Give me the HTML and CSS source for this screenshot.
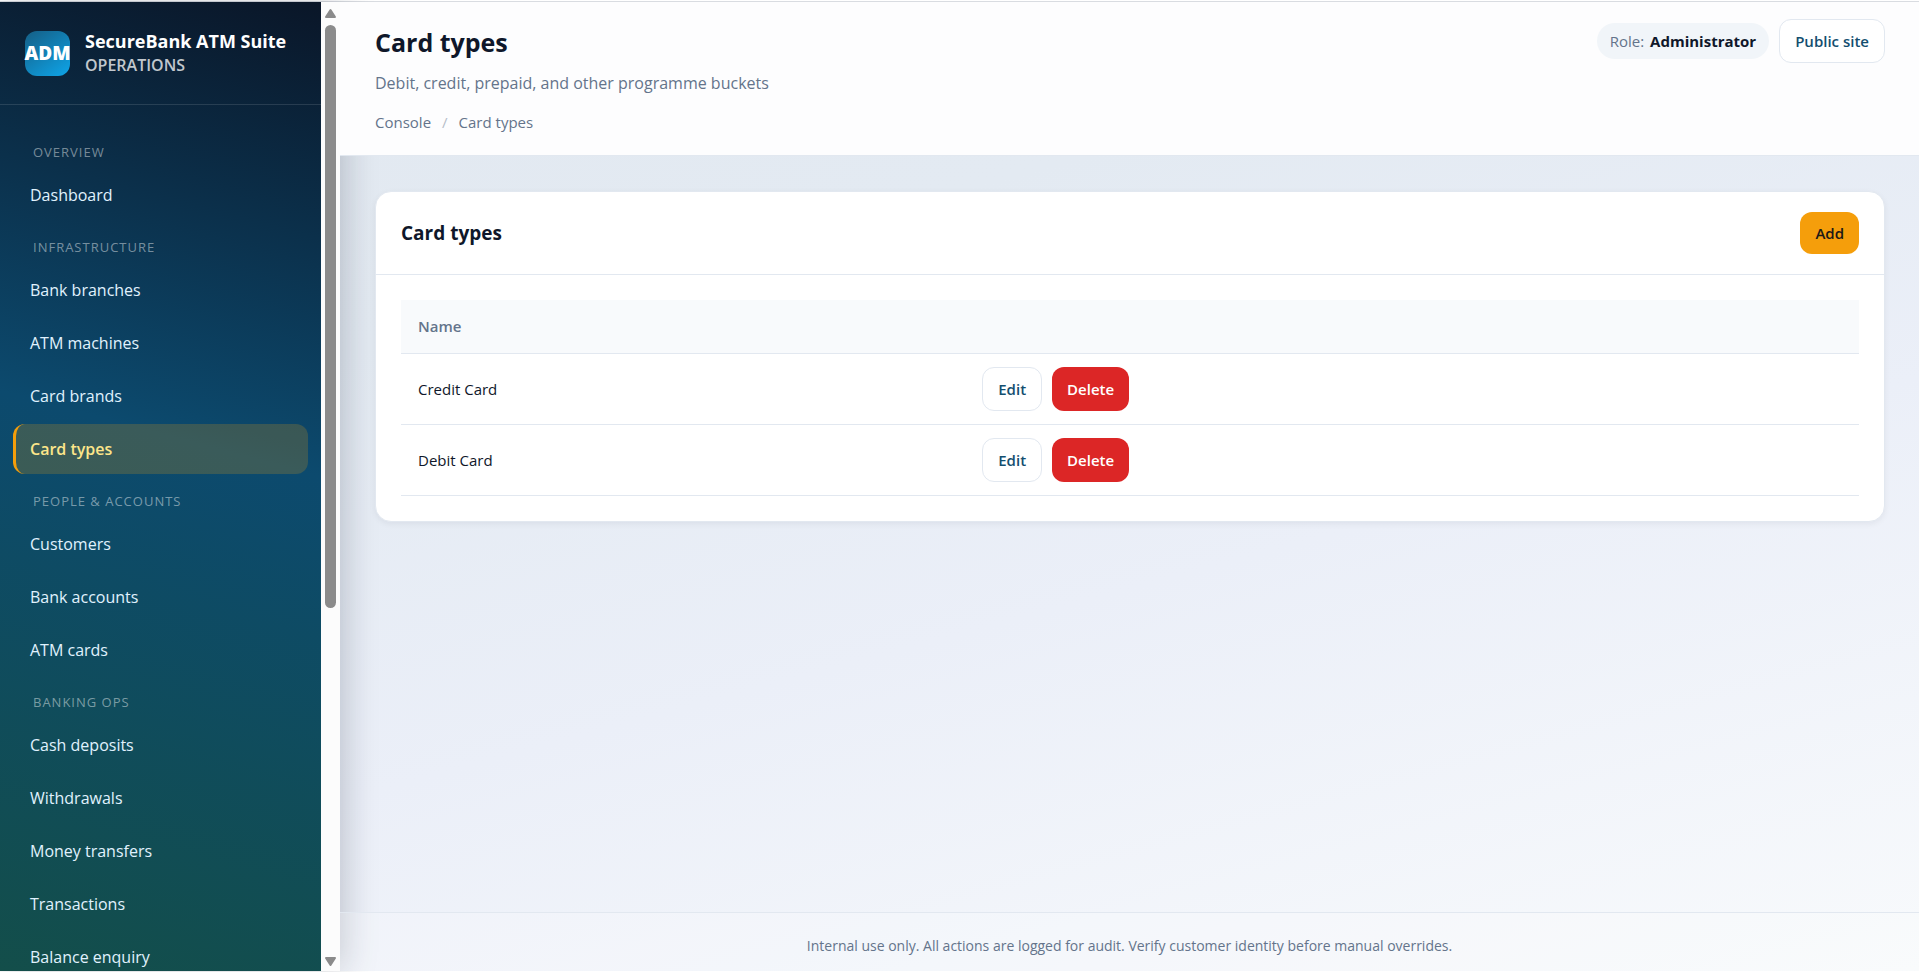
FILE: index.html
```html
<!DOCTYPE html>
<html lang="en">
    <head>
        <meta charset="utf-8">
        <meta name="viewport" content="width=device-width, initial-scale=1">
        <title>Card types - SecureBank ATM Suite</title>
        <link rel="stylesheet" href="styles.css">
    </head>

    <body>
        <div class="layout">

            <aside class="sidebar">
                <div class="sidebar-inner">
                    <div class="brand">
                        <div class="brand-logo">ADM</div>
                        <div>
                            <div class="brand-name">SecureBank ATM Suite</div>
                            <div class="brand-sub">OPERATIONS</div>
                        </div>
                    </div>

                    <nav class="nav">
                        <div class="nav-label">OVERVIEW</div>
                        <a class="nav-link" href="#">Dashboard</a>

                        <div class="nav-label">INFRASTRUCTURE</div>
                        <a class="nav-link" href="#">Bank branches</a>
                        <a class="nav-link" href="#">ATM machines</a>
                        <a class="nav-link" href="#">Card brands</a>
                        <a class="nav-link active" href="#">Card types</a>

                        <div class="nav-label">PEOPLE &amp; ACCOUNTS</div>
                        <a class="nav-link" href="#">Customers</a>
                        <a class="nav-link" href="#">Bank accounts</a>
                        <a class="nav-link" href="#">ATM cards</a>

                        <div class="nav-label">BANKING OPS</div>
                        <a class="nav-link" href="#">Cash deposits</a>
                        <a class="nav-link" href="#">Withdrawals</a>
                        <a class="nav-link" href="#">Money transfers</a>
                        <a class="nav-link" href="#">Transactions</a>
                        <a class="nav-link" href="#">Balance enquiry</a>
                    </nav>
                </div>

                <div class="scrollbar">
                    <svg width="13" height="11" viewBox="0 0 13 11"><path d="M6.500 2L11 9H2Z" /></svg>
                    <div class="scroll-track">
                        <div class="scroll-thumb"></div>
                    </div>
                    <svg width="13" height="11" viewBox="0 0 13 11"><path d="M6.500 9L2 2H11Z" /></svg>
                </div>
            </aside>

            <div class="main">
                <header class="topbar">
                    <div>
                        <h1 class="page-title">Card types</h1>
                        <p class="page-desc">Debit, credit, prepaid, and other programme buckets</p>
                        <nav class="breadcrumb">
                            <a href="#">Console</a>
                            <span class="sep">/</span>
                            <span>Card types</span>
                        </nav>
                    </div>
                    <div class="topbar-actions">
                        <span class="role">Role: <strong>Administrator</strong></span>
                        <a class="btn btn-outline" href="#">Public site</a>
                    </div>
                </header>

                <main class="content">
                    <section class="card">
                        <div class="card-head">
                            <h2 class="card-title">Card types</h2>
                            <button type="button" class="btn btn-add">Add</button>
                        </div>
                        <div class="card-body">
                            <table class="table">
                                <thead>
                                    <tr>
                                        <th class="col-name">Name</th>
                                        <th></th>
                                    </tr>
                                </thead>
                                <tbody>
                                    <tr>
                                        <td>Credit Card</td>
                                        <td>
                                            <div class="row-actions">
                                                <a class="btn btn-outline" href="#">Edit</a>
                                                <button type="button" class="btn btn-delete">Delete</button>
                                            </div>
                                        </td>
                                    </tr>
                                    <tr>
                                        <td>Debit Card</td>
                                        <td>
                                            <div class="row-actions">
                                                <a class="btn btn-outline" href="#">Edit</a>
                                                <button type="button" class="btn btn-delete">Delete</button>
                                            </div>
                                        </td>
                                    </tr>
                                </tbody>
                            </table>
                        </div>
                    </section>
                </main>

                <footer class="footer">Internal use only. All actions are logged for audit. Verify customer identity before manual overrides.</footer>
            </div>

        </div>
    </body>
</html>
```
FILE: styles.css
```css
* {
    box-sizing: border-box;
}

body {
    margin: 0;
    height: 100vh;
    padding: 1px 0;
    font-family: "Segoe UI", "Open Sans", sans-serif;
    font-size: 15px;
    line-height: 24px;
    color: #0f172a;
    background: #fff;
}

a {
    color: inherit;
    text-decoration: none;
}

.layout {
    display: flex;
    height: 100%;
    border-top: 1px solid #d9dce1;
    background: linear-gradient(165deg, #e2e8f0 0%, #e3eaf2 30%, #ebeff8 60%, #f8fafc 100%);
}

/* sidebar */

.sidebar {
    flex: 0 0 340px;
    display: flex;
    box-shadow: 4px 0 32px rgba(15, 23, 42, 0.22);
}

.sidebar-inner {
    flex: 1;
    overflow-y: auto;
    scrollbar-width: none;
    background: linear-gradient(195deg, #0a1628 0%, #0c4a6e 45%, #134e4a 100%);
}

.scrollbar {
    display: flex;
    flex-direction: column;
    align-items: center;
    width: 19px;
    padding: 6px 0 4px;
    background: #fcfcfc;
}

.scrollbar svg {
    fill: #8b8b8b;
    stroke: #8b8b8b;
    stroke-width: 2;
    stroke-linejoin: round;
}

.scroll-track {
    flex: 1;
    width: 11px;
    padding: 6px 0;
}

.scroll-thumb {
    height: 63%;
    border-radius: 6px;
    background: #8b8b8b;
}

.brand {
    display: flex;
    align-items: center;
    gap: 15px;
    padding: 27px 25px;
    border-bottom: 1px solid rgba(255, 255, 255, 0.12);
}

.brand-logo {
    display: flex;
    align-items: center;
    justify-content: center;
    width: 45px;
    height: 45px;
    border-radius: 12px;
    background: linear-gradient(145deg, #155e85, #0ea5e9);
    color: #fff;
    font-weight: 800;
    font-size: 19px;
}

.brand-name {
    color: #fff;
    font-weight: 700;
    font-size: 18px;
}

.brand-sub {
    color: rgba(255, 255, 255, 0.75);
    font-weight: 600;
    font-size: 16px;
}

.nav {
    padding: 23px 13px;
}

.nav-label {
    padding: 12px 20px 6px;
    color: rgba(255, 255, 255, 0.45);
    font-size: 13px;
    letter-spacing: 1px;
}

.nav-link {
    display: block;
    margin-bottom: 3px;
    padding: 13px 14px;
    border-left: 3px solid transparent;
    border-radius: 12px;
    color: #e0f2fe;
    font-size: 16px;
}

.nav-link.active {
    border-left-color: #f59e0b;
    background: rgba(245, 158, 11, 0.2);
    color: #fde68a;
    font-weight: 600;
}

/* main column */

.main {
    flex: 1;
    min-width: 0;
    display: flex;
    flex-direction: column;
}

.topbar {
    position: relative;
    display: flex;
    justify-content: space-between;
    align-items: flex-start;
    padding: 17px 34px 21px 35px;
    border-bottom: 1px solid #e2e8f0;
    background: #fdfdfe;
}

.page-title {
    margin: 0;
    font-size: 25px;
    line-height: 46px;
    font-weight: 700;
}

.page-desc {
    margin: 6px 0 15px;
    color: #64748b;
    font-size: 16px;
}

.breadcrumb {
    display: flex;
    gap: 11px;
    color: #64748b;
}

.sep {
    color: #b6bec9;
}

.topbar-actions {
    display: flex;
    align-items: center;
    gap: 10px;
}

.role {
    padding: 6px 13px;
    border-radius: 18px;
    background: #f1f5f9;
    color: #64748b;
}

.role strong {
    margin-left: 2px;
    color: #0f172a;
}

.btn {
    display: inline-block;
    padding: 9px 14px;
    border: 1px solid transparent;
    border-radius: 12px;
    font-family: inherit;
    font-size: 15px;
    line-height: 24px;
    font-weight: 600;
    cursor: pointer;
}

.btn-outline {
    padding: 9px 15px;
    border-color: #e2e8f0;
    background: #fff;
    color: #134e6f;
}

.btn-add {
    padding: 8px 14px;
    background: #f59e0b;
    color: #1c1917;
}

.btn-delete {
    background: #dc2626;
    color: #fff;
}

.content {
    flex: 1;
    padding: 35px 34px 35px 35px;
}

.card {
    position: relative;
    border: 1px solid #e2e8f0;
    border-radius: 16px;
    background: #fff;
    box-shadow: 0 2px 6px rgba(15, 23, 42, 0.06);
}

.card-head {
    display: flex;
    justify-content: space-between;
    align-items: center;
    padding: 20px 25px;
    border-bottom: 1px solid #e2e8f0;
}

.card-title {
    margin: 0;
    font-size: 19px;
    font-weight: 700;
}

.card-body {
    padding: 25px;
}

.table {
    width: 100%;
    border-collapse: collapse;
}

.table th,
.table td {
    padding: 13px 17px;
    border-bottom: 1px solid #e2e8f0;
    text-align: left;
}

.table th {
    height: 53px;
    background: #f8fafc;
    color: #64748b;
    font-weight: 600;
}

.table .col-name {
    width: 38.7%;
}

.row-actions {
    display: flex;
    gap: 10px;
}

.footer {
    padding: 21px 35px 13px;
    border-top: 1px solid #e2e8f0;
    background: rgba(255, 255, 255, 0.2);
    color: #64748b;
    font-size: 14px;
    text-align: center;
}
```
